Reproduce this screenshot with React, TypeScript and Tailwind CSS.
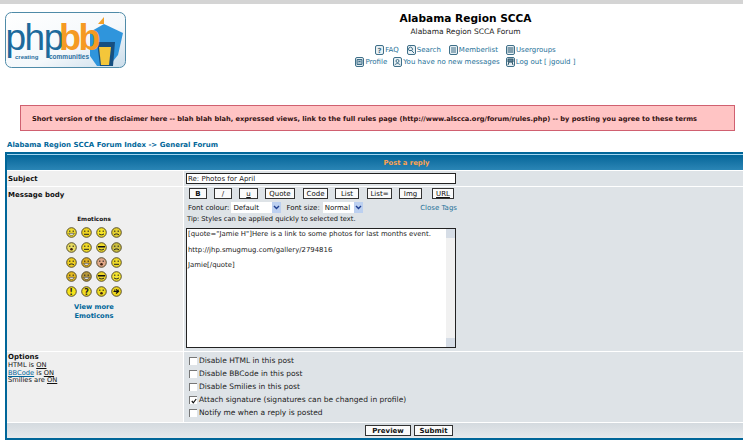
const verdana = { fontFamily: '"DejaVu Sans", Verdana, sans-serif' }

function NavIcon({ kind }: { kind: string }) {
  return (
    <svg width="9" height="10" viewBox="0 0 9 10" className="shrink-0">
      <rect x="0.5" y="0.5" width="8" height="9" rx="1.5" fill="#e8f0f4" stroke="#3f6f88" />
      {kind === 'faq' && <text x="2.4" y="7.6" fontSize="7" fontWeight="700" fill="#3f6f88">?</text>}
      {kind === 'search' && <path d="M2 5.5a2 2 0 1 1 3 0zM5 6l2 2" fill="none" stroke="#3f6f88" />}
      {kind === 'list' && <path d="M2 3h5M2 5h5M2 7h5" stroke="#3f6f88" />}
      {kind === 'group' && <path d="M1.5 3h6M1.5 5h6M1.5 7h6" stroke="#1f4f68" strokeWidth="1.2" />}
      {kind === 'profile' && <path d="M2 2.5h5v5H2zM3.5 4.5h2" fill="#a9c0cc" stroke="#3f6f88" />}
      {kind === 'msg' && <path d="M3 4a1.5 1.5 0 1 1 3 0 1.5 1.5 0 0 1-3 0M2 8c.5-2 4.500-2 5 0" fill="none" stroke="#3f6f88" />}
      {kind === 'logout' && <path d="M2 2h5v3H2zM3 5l-1 3M6 5l1 3" fill="#5f8296" stroke="#2f5568" />}
    </svg>
  )
}

function NavLink({ kind, label }: { kind: string; label: string }) {
  return (
    <span className="flex items-center gap-[1px] text-[#1f7299]">
      <NavIcon kind={kind} />
      {label}
    </span>
  )
}

function Smiley({ fill, mouth }: { fill: string; mouth: string }) {
  return (
    <svg width="11" height="11" viewBox="0 0 11 11">
      <circle cx="5.5" cy="5.5" r="4.8" fill={fill} stroke="#4a4020" strokeWidth="0.9" />
      {mouth === 'shades' ? (
        <path d="M2 4h7v1.500H2z" fill="#111" />
      ) : mouth === 'q' ? null : (
        <path d="M3.800 3.500v1.500M7.200 3.500v1.500" stroke="#222" strokeWidth="1" />
      )}
      {mouth === 'smile' && <path d="M3 6.800c1 1.400 4 1.400 5 0" fill="none" stroke="#222" />}
      {mouth === 'sad' && <path d="M3 8c1-1.400 4-1.400 5 0" fill="none" stroke="#222" />}
      {mouth === 'flat' && <path d="M3 7.300h5" stroke="#222" />}
      {mouth === 'grin' && <path d="M2.800 6.300h5.400c0 2.600-5.400 2.600-5.400 0z" fill="#fff" stroke="#222" strokeWidth="0.6" />}
      {mouth === 'shades' && <path d="M3 7c1 1.200 4 1.200 5 0" fill="none" stroke="#222" />}
      {mouth === 'open' && <circle cx="5.500" cy="7.300" r="1.300" fill="#402010" />}
      {mouth === 'q' && <text x="3.300" y="8.500" fontSize="8" fontWeight="700" fill="#222">{fill === '#f6e21a' ? '!' : '?'}</text>}
      {mouth === 'arrow' && <path d="M2.500 5.500h4M5 3.500l2.500 2-2.500 2" fill="none" stroke="#111" strokeWidth="1.200" />}
    </svg>
  )
}

const smileys = [
  ['#f0dc30', 'grin'], ['#eed420', 'flat'], ['#f6e428', 'smile'], ['#e4d030', 'sad'],
  ['#e8dc60', 'open'], ['#f0da28', 'flat'], ['#f0dc30', 'shades'], ['#ccbf40', 'sad'],
  ['#eece20', 'sad'], ['#e0b020', 'grin'], ['#e0a888', 'open'], ['#eeda28', 'flat'],
  ['#e6bc20', 'grin'], ['#b89838', 'grin'], ['#eed628', 'shades'], ['#f4e430', 'smile'],
  ['#f6e21a', 'q'], ['#f0dc20', 'q'], ['#ecd820', 'open'], ['#f0d820', 'arrow'],
]

const buttons = [
  { label: 'B', w: 'w-[18px] font-bold' },
  { label: '/', w: 'w-[18px] ml-[7px]' },
  { label: 'u', w: 'w-[19px] ml-[7px] underline' },
  { label: 'Quote', w: 'w-[30px] ml-[7px]' },
  { label: 'Code', w: 'w-[25px] ml-[8px]' },
  { label: 'List', w: 'w-[24px] ml-[7px]' },
  { label: 'List=', w: 'w-[25px] ml-[8px]' },
  { label: 'Img', w: 'w-[23px] ml-[7px]' },
  { label: 'URL', w: 'w-[22px] ml-[10px] underline' },
]

const options = [
  ['Disable HTML in this post', false],
  ['Disable BBCode in this post', false],
  ['Disable Smilies in this post', false],
  ['Attach signature (signatures can be changed in profile)', true],
  ['Notify me when a reply is posted', false],
] as const

function FakeSelect({ label, className }: { label: string; className: string }) {
  return (
    <span className={`flex h-[11px] items-center justify-between bg-white pl-[2px] ${className}`}>
      {label}
      <span className="flex h-[11px] w-[9px] items-center justify-center bg-[#bcd0f0]">
        <svg width="7" height="5" viewBox="0 0 7 5"><path d="M1 1l2.500 2.500L6 1" fill="none" stroke="#1f3f90" strokeWidth="1.400" /></svg>
      </span>
    </span>
  )
}

export default function App() {
  return (
    <div className="h-[442px] w-[743px] overflow-hidden bg-white text-[8px] leading-[10px] text-[#111]" style={verdana}>
      <div className="h-[4px] bg-[#d4d4d4]" />

      <header className="flex h-[86px] pl-[5px] pt-[8px]">
        <svg width="121" height="56" viewBox="0 0 121 56" className="shrink-0">
          <defs>
            <linearGradient id="logobg" x1="0" y1="0" x2="1" y2="1">
              <stop offset="0" stopColor="#ffffff" />
              <stop offset="0.6" stopColor="#f4f8fb" />
              <stop offset="1" stopColor="#c9dcea" />
            </linearGradient>
          </defs>
          <rect x="0.5" y="0.5" width="120" height="55" rx="6" fill="url(#logobg)" stroke="#4f8ba8" />
          <path d="M93 12l6-7v7z" fill="#f2a12a" />
          <path d="M85 20l14-8 19 9-5 22-9 11h-12l-7-10z" fill="#2f95dc" />
          <path d="M92 30h18l-2 24H95z" fill="#164f80" />
          <path d="M94 35h12l-2 18h-8z" fill="#f4c63a" />
          <text x="0.5" y="38" fontSize="37" fill="#1d6a9c" fontFamily="Liberation Sans, sans-serif" letterSpacing="-1.500">php</text>
          <text x="54" y="38" fontSize="36" fontWeight="700" fill="#f59a23" fontFamily="Liberation Sans, sans-serif" letterSpacing="-2.500">bb</text>
          <text x="10" y="47" fontSize="6" fontWeight="700" fill="#2a6fa0" fontFamily="Liberation Sans, sans-serif">creating</text>
          <text x="44" y="47" fontSize="6.500" fontWeight="700" fill="#2a6fa0" fontFamily="Liberation Sans, sans-serif">communities</text>
        </svg>
        <div className="ml-[142px] flex w-[395px] flex-col items-center">
          <div className="mt-[2px] text-[10.600px] font-bold leading-[8px] text-black">Alabama Region SCCA</div>
          <div className="mt-[4px] text-[7.500px] leading-[11px] text-[#222]">Alabama Region SCCA Forum</div>
          <div className="mt-[8px] flex gap-[8px] text-[7px]">
            <NavLink kind="faq" label="FAQ" />
            <NavLink kind="search" label="Search" />
            <NavLink kind="list" label="Memberlist" />
            <NavLink kind="group" label="Usergroups" />
          </div>
          <div className="mt-[2px] flex gap-[6px] text-[7px]">
            <NavLink kind="profile" label="Profile" />
            <NavLink kind="msg" label="You have no new messages" />
            <NavLink kind="logout" label="Log out [ jgould ]" />
          </div>
        </div>
      </header>

      <div className="ml-[20px] mt-[15px] flex h-[26px] w-[715px] items-center justify-center border border-[#d06070] bg-[#ffc4c4] pr-[26px] pt-[1px] text-[6.650px] font-bold text-[#331111]">
        Short version of the disclaimer here -- blah blah blah, expressed views, link to the full rules page (http://www.alscca.org/forum/rules.php) -- by posting you agree to these terms
      </div>

      <div className="ml-[7px] mt-[8px] h-[12px] text-[7px] font-bold leading-[12px] text-[#006699]">
        Alabama Region SCCA Forum Index -&gt; General Forum
      </div>

      <main className="ml-[5px] mt-[1px] w-[803px] border-2 border-[#006699] bg-white">
        <div className="flex h-[16px] items-center justify-center border-t border-[#9fd4f0] bg-gradient-to-b from-[#006699] to-[#2a85b5] text-[6.800px] font-bold text-[#ffa34f]">
          Post a reply
        </div>

        <div className="mt-[1px] grid grid-cols-[176px_1fr] gap-x-[1px] gap-y-[1px] bg-white">
          <div className="flex h-[15px] items-center bg-[#efefef] pl-[1px] text-[7px] font-bold">Subject</div>
          <div className="flex h-[15px] items-center bg-[#dee3e7] pl-[2px]">
            <input readOnly value="Re: Photos for April" className="h-[11px] w-[270px] border border-[#222] bg-white px-[1px] text-[7px] leading-[9px] text-[#222] outline-none" />
          </div>

          <div className="flex h-[164px] flex-col bg-[#efefef] pl-[1px] pt-[3px]">
            <div className="text-[7px] font-bold">Message body</div>
            <div className="ml-[56px] mt-[15px] flex w-[60px] flex-col items-center">
              <div className="text-[5.800px] font-bold leading-[9px]">Emoticons</div>
              <div className="mt-[3px] grid grid-cols-[repeat(4,15px)] justify-items-center gap-y-[3.750px]">
                {smileys.map(([fill, mouth], i) => (
                  <Smiley key={i} fill={fill} mouth={mouth} />
                ))}
              </div>
              <div className="mt-[6px] text-center text-[6.700px] font-bold leading-[8.500px] text-[#006699]">View more<br />Emoticons</div>
            </div>
          </div>
          <div className="flex h-[164px] flex-col bg-[#dee3e7] pl-[2px] pt-[1px]">
            <div className="flex pl-[3px]">
              {buttons.map(b => (
                <span key={b.label} className={`flex h-[11px] items-center justify-center border border-[#333] bg-[#fafafa] text-[7px] ${b.w}`}>
                  {b.label}
                </span>
              ))}
            </div>
            <div className="mt-[3px] flex w-[271px] items-center pl-[2px] text-[7px]">
              <span>Font colour:</span>
              <FakeSelect label="Default" className="ml-[2px] w-[50px]" />
              <span className="ml-[5px]">Font size:</span>
              <FakeSelect label="Normal" className="ml-[3px] w-[40px]" />
              <span className="ml-auto text-[#1f7299]">Close Tags</span>
            </div>
            <div className="mt-[2px] pl-[1px] text-[6.700px] leading-[9px]">Tip: Styles can be applied quickly to selected text.</div>
            <div className="mt-[4px] flex h-[120px] w-[270px] border border-[#222] bg-white">
              <div className="flex flex-1 flex-col gap-[5.500px] px-[1px] text-[6.900px] leading-[10px] text-[#222]">
                <div>[quote="Jamie H"]Here is a link to some photos for last months event.</div>
                <div>http://jhp.smugmug.com/gallery/2794816</div>
                <div>Jamie[/quote]</div>
              </div>
              <div className="flex w-[9px] flex-col justify-between bg-[#f1f1f1]">
                <div className="h-[9px] bg-[#d6dde6]" />
                <div className="h-[9px] bg-[#d6dde6]" />
              </div>
            </div>
          </div>

          <div className="h-[70px] bg-[#efefef] pl-[1px] pt-[1px] text-[6.700px] leading-[7.500px]">
            <div className="text-[7px] font-bold leading-[9px]">Options</div>
            <div>HTML is <u>ON</u></div>
            <div><u className="text-[#006699]">BBCode</u> is <u>ON</u></div>
            <div>Smilies are <u>ON</u></div>
          </div>
          <div className="flex h-[70px] flex-col justify-center gap-[3px] bg-[#dee3e7] pl-[5px] text-[7.500px] text-[#222]">
            {options.map(([label, checked]) => (
              <div key={label} className="flex h-[10px] items-center gap-[1px]">
                <span className="flex h-[8px] w-[8px] items-center justify-center border-l border-t border-[#777] bg-white">
                  {checked && (
                    <svg width="6" height="6" viewBox="0 0 6 6"><path d="M.8 3l1.500 1.800L5.200 1" fill="none" stroke="#111" strokeWidth="1.200" /></svg>
                  )}
                </span>
                <span className="ml-[1px]">{label}</span>
              </div>
            ))}
          </div>
        </div>

        <div className="mt-[1px] flex h-[15px] items-center justify-center gap-[3px] bg-gradient-to-b from-[#d4dadf] to-[#e6e9ec] pl-[5px]">
          <span className="flex h-[11px] w-[46px] items-center justify-center border border-[#333] bg-[#fafafa] text-[7px] font-bold">Preview</span>
          <span className="flex h-[11px] w-[39px] items-center justify-center border border-[#333] bg-[#fafafa] text-[7px] font-bold">Submit</span>
        </div>
      </main>
    </div>
  )
}
